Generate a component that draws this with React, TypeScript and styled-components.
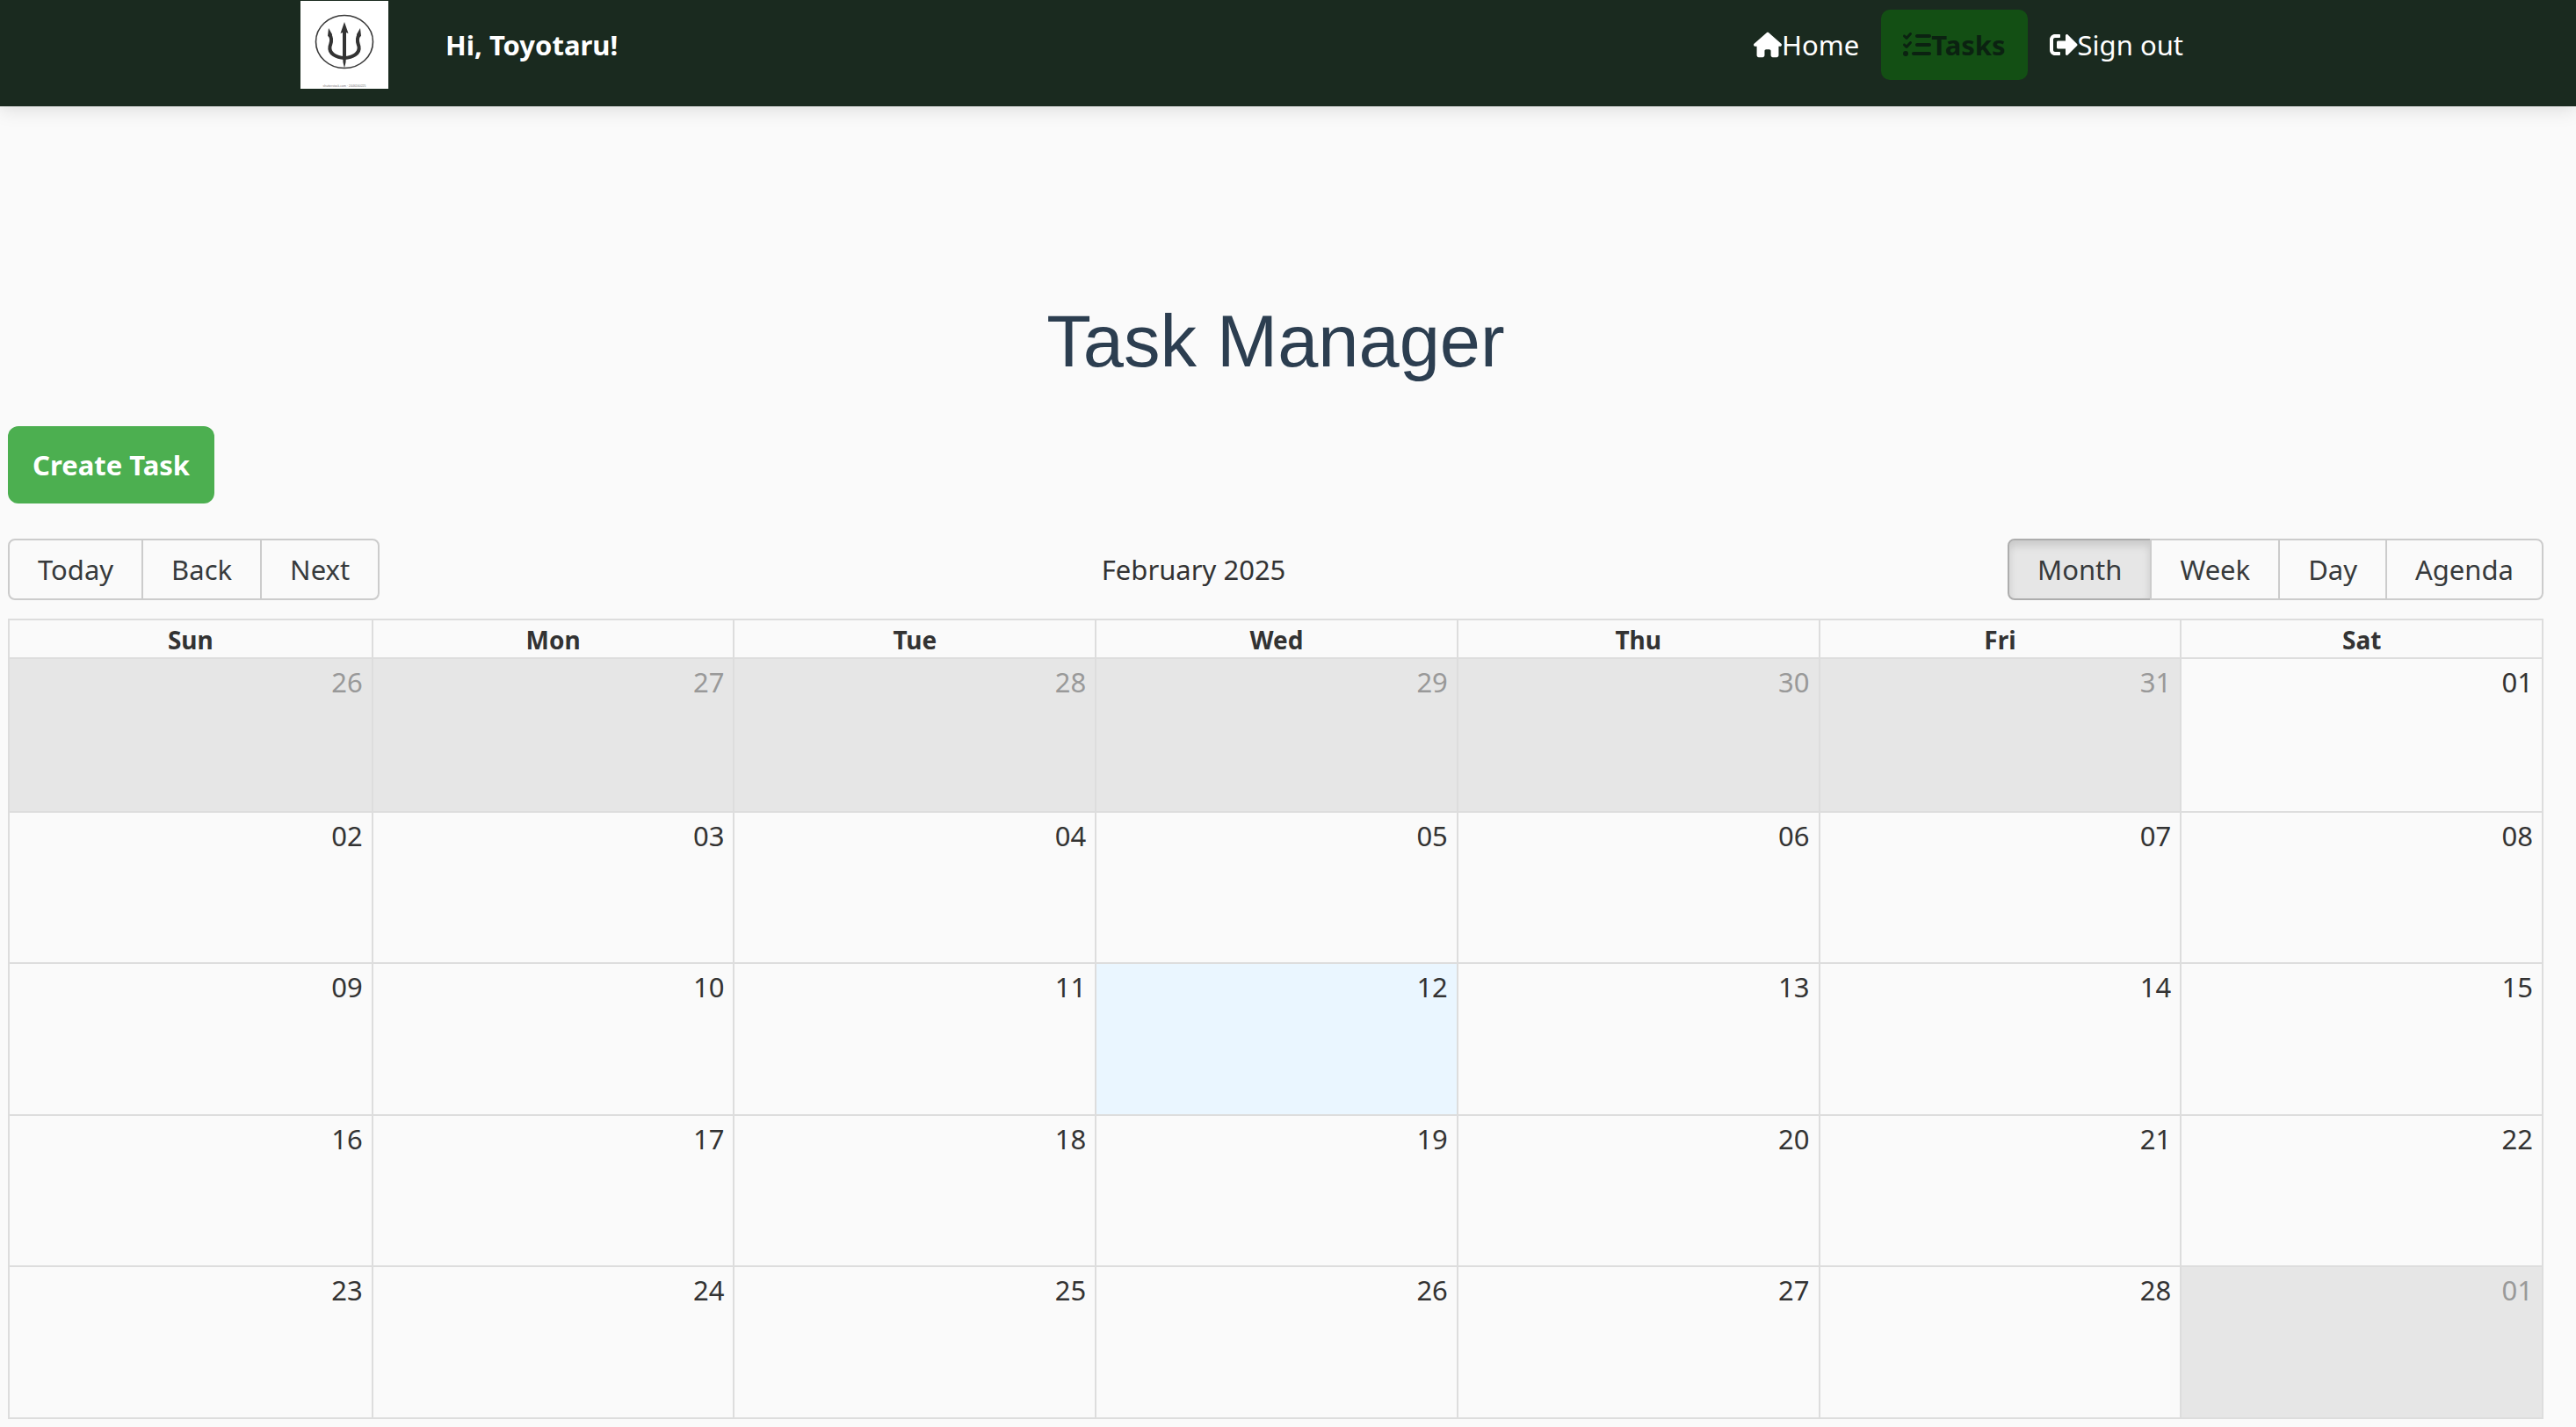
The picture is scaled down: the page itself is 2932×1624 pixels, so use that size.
import React from "react";
import styled, { createGlobalStyle } from "styled-components";
import { FaSignOutAlt } from "react-icons/fa";
import { FaHouse, FaListCheck } from "react-icons/fa6";

const bodyFont = `"Noto Sans", "Open Sans", sans-serif`;

type Day = { label: string; off?: boolean; today?: boolean };

const weekdays = ["Sun", "Mon", "Tue", "Wed", "Thu", "Fri", "Sat"];

const weeks: Day[][] = [
  [
    { label: "26", off: true },
    { label: "27", off: true },
    { label: "28", off: true },
    { label: "29", off: true },
    { label: "30", off: true },
    { label: "31", off: true },
    { label: "01" },
  ],
  ["02", "03", "04", "05", "06", "07", "08"].map((label) => ({ label })),
  ["09", "10", "11", "12", "13", "14", "15"].map((label) => ({
    label,
    today: label === "12",
  })),
  ["16", "17", "18", "19", "20", "21", "22"].map((label) => ({ label })),
  [
    { label: "23" },
    { label: "24" },
    { label: "25" },
    { label: "26" },
    { label: "27" },
    { label: "28" },
    { label: "01", off: true },
  ],
];

function TridentLogo() {
  return (
    <LogoBox>
      <svg viewBox="0 0 100 100" width="100" height="100">
        <ellipse cx="50" cy="46.5" rx="32.5" ry="30" fill="none" stroke="#3a3a3a" strokeWidth="1.6" />
        <path d="M50 24 L54.5 37 L52 36 L52 62 L51.5 70 L50 76.5 L48.5 70 L48 62 L48 36 L45.5 37 Z" fill="#333" />
        <path
          d="M33.5 39 C37 44 34.5 48 33.5 52 C32 60 41 64.5 50 65 C59 64.5 68 60 66.5 52 C65.5 48 63 44 66.5 39"
          fill="none"
          stroke="#333"
          strokeWidth="4"
        />
        <path d="M32 31 L36 38 L35.5 43 L31 40 Z M68 31 L64 38 L64.5 43 L69 40 Z" fill="#333" />
        <text x="50" y="98" textAnchor="middle" fontSize="3.5" fill="#777" fontFamily="Liberation Sans, sans-serif">
          shutterstock.com · 2446160225
        </text>
      </svg>
    </LogoBox>
  );
}

function App() {
  return (
    <>
      <GlobalStyle />
      <TopBar>
        <TopBarRow>
          <TridentLogo />
          <Greeting>Hi, Toyotaru!</Greeting>
          <NavLinks>
            <NavLink>
              <FaHouse size={32} />
              Home
            </NavLink>
            <NavLink $active>
              <FaListCheck size={32} />
              Tasks
            </NavLink>
            <NavLink>
              <FaSignOutAlt size={32} />
              Sign out
            </NavLink>
          </NavLinks>
        </TopBarRow>
      </TopBar>
      <Main>
        <PageTitle>Task Manager</PageTitle>
        <CreateButton>Create Task</CreateButton>
        <Toolbar>
          <ButtonGroup>
            <ToolButton>Today</ToolButton>
            <ToolButton>Back</ToolButton>
            <ToolButton>Next</ToolButton>
          </ButtonGroup>
          <MonthLabel>February 2025</MonthLabel>
          <ButtonGroup>
            <ToolButton $active>Month</ToolButton>
            <ToolButton>Week</ToolButton>
            <ToolButton>Day</ToolButton>
            <ToolButton>Agenda</ToolButton>
          </ButtonGroup>
        </Toolbar>
        <Calendar>
          <HeaderRow>
            {weekdays.map((day) => (
              <HeaderCell key={day}>{day}</HeaderCell>
            ))}
          </HeaderRow>
          {weeks.map((week, index) => (
            <WeekRow key={index}>
              {week.map((day, dayIndex) => (
                <DayCell key={dayIndex} $off={day.off} $today={day.today}>
                  {day.label}
                </DayCell>
              ))}
            </WeekRow>
          ))}
        </Calendar>
      </Main>
    </>
  );
}

export default App;

const GlobalStyle = createGlobalStyle`
  html, body {
    margin: 0;
    padding: 0;
    background: #fafafa;
    color: #333;
    font-family: ${bodyFont};
  }
  * {
    box-sizing: border-box;
  }
`;

const TopBar = styled.header`
  height: 121px;
  background: #1a2a1f;
  box-shadow: 0 4px 20px rgba(0, 0, 0, 0.12);
  padding: 0 422px 0 342px;
`;

const TopBarRow = styled.div`
  display: flex;
  align-items: center;
  height: 102px;
`;

const LogoBox = styled.div`
  width: 100px;
  height: 100px;
  background: #fff;
  flex: none;

  svg {
    display: block;
  }
`;

const Greeting = styled.div`
  margin-left: 65px;
  font-size: 31px;
  font-weight: 700;
  color: #fff;
`;

const NavLinks = styled.nav`
  display: flex;
  align-items: center;
  margin-left: auto;
`;

const NavLink = styled.a<{ $active?: boolean }>`
  display: flex;
  align-items: center;
  height: 80px;
  padding: 0 25px;
  border-radius: 10px;
  font-size: 31px;
  font-weight: ${({ $active }) => ($active ? 700 : 400)};
  color: ${({ $active }) => ($active ? "#0b2211" : "#fff")};
  background: ${({ $active }) => ($active ? "#134f14" : "transparent")};
`;

const Main = styled.main`
  padding: 0 37px 0 9px;
`;

const PageTitle = styled.h1`
  margin: 226px 0 55px;
  font-family: "Liberation Sans", Arial, sans-serif;
  font-size: 83px;
  line-height: 83px;
  font-weight: 400;
  text-align: center;
  color: #2c3e50;
`;

const CreateButton = styled.button`
  display: block;
  width: 235px;
  height: 88px;
  border: 0;
  border-radius: 12px;
  background: #4caf50;
  color: #fff;
  font-family: ${bodyFont};
  font-size: 31px;
  font-weight: 700;
`;

const Toolbar = styled.div`
  display: flex;
  align-items: center;
  justify-content: space-between;
  margin: 40px 0 21px;
`;

const ButtonGroup = styled.div`
  display: flex;
`;

const ToolButton = styled.button<{ $active?: boolean }>`
  height: 70px;
  padding: 0 32px;
  margin-left: -2px;
  border: 2px solid ${({ $active }) => ($active ? "#adadad" : "#ccc")};
  background: ${({ $active }) => ($active ? "#e6e6e6" : "transparent")};
  box-shadow: ${({ $active }) => ($active ? "inset 0 6px 10px rgba(0, 0, 0, 0.125)" : "none")};
  color: #373a3c;
  font-family: ${bodyFont};
  font-size: 31px;

  &:first-child {
    margin-left: 0;
    border-radius: 8px 0 0 8px;
  }
  &:last-child {
    border-radius: 0 8px 8px 0;
  }
`;

const MonthLabel = styled.span`
  font-size: 31px;
  color: #333;
`;

const Calendar = styled.section`
  border: 2px solid #ddd;
`;

const HeaderRow = styled.div`
  display: grid;
  grid-template-columns: repeat(7, 1fr);
  height: 44px;
`;

const HeaderCell = styled.div`
  display: flex;
  align-items: flex-end;
  justify-content: center;
  font-size: 28px;
  line-height: 40px;
  font-weight: 700;
  border-bottom: 2px solid #ddd;

  & + & {
    border-left: 2px solid #ddd;
  }
`;

const WeekRow = styled.div`
  display: grid;
  grid-template-columns: repeat(7, 1fr);
  height: 172.6px;

  & + & {
    border-top: 2px solid #ddd;
  }
`;

const DayCell = styled.div<{ $off?: boolean; $today?: boolean }>`
  padding: 6px 10px 0 0;
  text-align: right;
  font-size: 31px;
  line-height: 40px;
  color: ${({ $off }) => ($off ? "#999" : "#333")};
  background: ${({ $off, $today }) => ($off ? "#e6e6e6" : $today ? "#eaf6ff" : "transparent")};

  & + & {
    border-left: 2px solid #ddd;
  }
`;
